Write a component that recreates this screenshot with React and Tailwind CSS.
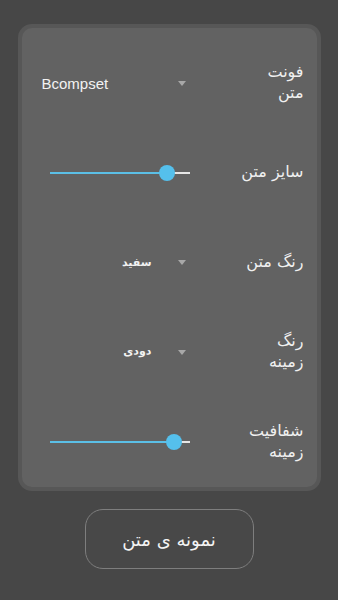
import React from "react";

const Arrow = () => (
  <div className="w-0 h-0 border-l-[4px] border-r-[4px] border-t-[5px] border-l-transparent border-r-transparent border-t-[#a8a8a8]" />
);

const Slider = ({ pos }) => (
  <div className="relative w-[140px] h-[16px] ml-[8px] flex items-center">
    <div className="absolute left-0 right-0 h-[2px] bg-[#e6e6e6]" />
    <div className="absolute left-0 h-[2px] bg-[#5bbfe6]" style={{ width: pos }} />
    <div
      className="absolute w-[16px] h-[16px] rounded-full bg-[#55c0ec]"
      style={{ left: pos - 8 }}
    />
  </div>
);

const Label = ({ children }) => (
  <div dir="rtl" className="text-right text-[16px] leading-[21px] text-[#f0f0f0] -mt-[3px]">
    {children}
  </div>
);

export default function App() {
  const font = { fontFamily: '"DejaVu Sans", "Noto Sans", sans-serif' };
  return (
    <div className="w-[338px] h-[600px] bg-[#474747] flex flex-col items-center pt-[24px]" style={font}>
      <div className="w-[303px] h-[467px] rounded-[14px] border-[4px] border-[#575757] bg-[#626262] pt-[11px] pr-[13px] pl-[20px] flex flex-col">
        <div className="h-[90px] flex items-center justify-between">
          <div className="w-[150px] flex items-center justify-between">
            <span className="text-[15px] text-[#f2f2f2]" style={{ fontFamily: '"Liberation Sans", sans-serif' }}>Bcompset</span>
            <div className="mr-[6px]"><Arrow /></div>
          </div>
          <Label>فونت<br />متن</Label>
        </div>
        <div className="h-[90px] flex items-center justify-between">
          <div className="w-[150px] flex items-center"><Slider pos={117} /></div>
          <Label>سایز متن</Label>
        </div>
        <div className="h-[90px] flex items-center justify-between">
          <div className="w-[150px] flex items-center justify-end gap-[26px] pr-[6px]">
            <span dir="rtl" className="text-[11px] font-bold text-[#f2f2f2]">سفید</span>
            <Arrow />
          </div>
          <Label>رنگ متن</Label>
        </div>
        <div className="h-[90px] flex items-center justify-between">
          <div className="w-[150px] flex items-center justify-end gap-[26px] pr-[6px]">
            <span dir="rtl" className="text-[11px] font-bold text-[#f2f2f2]">دودی</span>
            <Arrow />
          </div>
          <Label>رنگ<br />زمینه</Label>
        </div>
        <div className="h-[90px] flex items-center justify-between">
          <div className="w-[150px] flex items-center"><Slider pos={124} /></div>
          <Label>شفافیت<br />زمینه</Label>
        </div>
      </div>
      <div className="mt-[18px] w-[169px] h-[60px] rounded-[18px] border border-[#7e7e7e] bg-[#484848] flex items-center justify-center">
        <span dir="rtl" className="text-[18px] text-[#f4f4f4]">نمونه ی متن</span>
      </div>
    </div>
  );
}
